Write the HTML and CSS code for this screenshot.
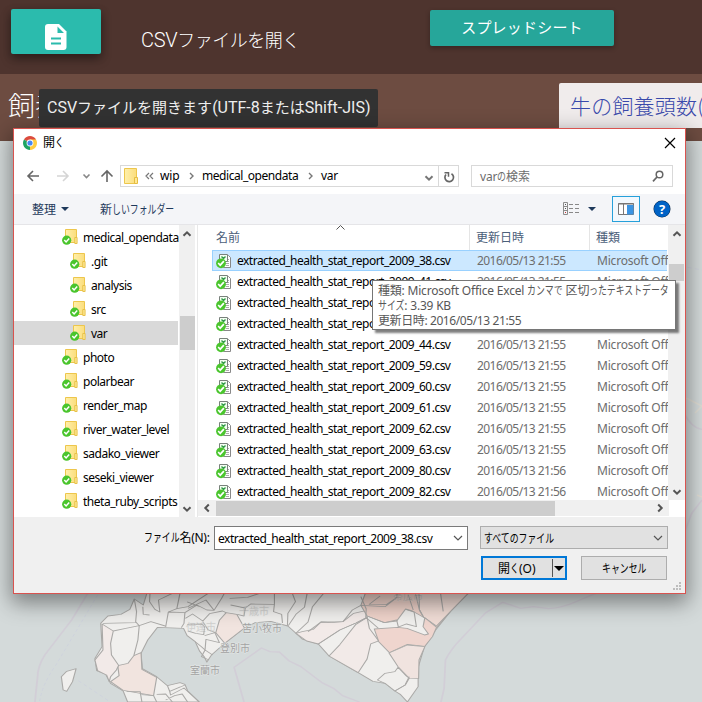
FILE: index.html
```html
<!DOCTYPE html>
<html lang="ja">
<head>
<meta charset="utf-8">
<title>CSVファイルを開く</title>
<link rel="stylesheet" href="styles.css">
</head>
<body>
<svg class="defs" aria-hidden="true">
  <linearGradient id="gold"><stop offset="0" stop-color="#fff0ab"/><stop offset="1" stop-color="#fbdd7c"/></linearGradient>
  <symbol id="folder" viewBox="0 0 16 17">
    <path d="M3.5 1.5h11v13h-11z" fill="url(#gold)" stroke="#edc64c"/>
    <path d="M12.8 9.5h2.3v6h-2.3z" fill="#ffe895" stroke="#e5bd42" stroke-width=".9"/>
    <circle cx="4.7" cy="12.2" r="4.6" fill="#4ac52d"/>
    <path d="M2.3 12.1l1.8 1.9 3.1-3.4" fill="none" stroke="#fff" stroke-width="1.5"/>
  </symbol>
  <symbol id="csv" viewBox="0 0 16 16">
    <path d="M7.500 2.500h5l2 2v10h-7z" fill="#fff" stroke="#888"/>
    <path d="M10 6.500h3M10 8.500h3M10 10.500h3M10 12.500h3" fill="none" stroke="#aaa"/>
    <path d="M3.500 1.500h8v7h-8z" fill="#f4fff2" stroke="#78817b"/>
    <path d="M5.500 3.500l2 2 2-2" stroke="#329948" fill="none" stroke-width="1.400"/>
    <circle cx="5" cy="10.300" r="4.900" fill="#4ac52d"/>
    <path d="M2.200 10l2 2.200 3.700-4" fill="none" stroke="#fff" stroke-width="1.700"/>
  </symbol>
  <symbol id="up" viewBox="0 0 10 10"><path d="M1.5 6.8L5 3.3l3.5 3.5" fill="none" stroke="#555" stroke-width="2"/></symbol>
  <symbol id="down" viewBox="0 0 10 10"><path d="M1.5 3.2L5 6.7l3.5-3.5" fill="none" stroke="#555" stroke-width="2"/></symbol>
  <symbol id="thin" viewBox="0 0 10 10"><path d="M1 3l4 4 4-4" fill="none" stroke="#555" stroke-width="1.2"/></symbol>
</svg>

<header class="bar">
  <button class="file-btn"><svg width="22" height="26" viewBox="0 0 22 26"><path fill="#fff" d="M3 0h11l7.5 7.5V23a3 3 0 0 1-3 3H3a3 3 0 0 1-3-3V3a3 3 0 0 1 3-3z"/><path fill="#2bbbad" d="M12.5 2.5v6.500h6.500zM6 13.500h10v2H6zM6 18.500h10v2H6z"/></svg></button>
  <h1 class="bar-title"><em>CSV</em>ファイルを開く</h1>
  <button class="sheet-btn"><span>スプレッドシート</span></button>
</header>
<section class="subbar">
  <h2 class="sub-title">飼養</h2>
  <div class="dataset">牛の飼養頭数(</div>
</section>
<main class="map">
  <svg width="702" height="561" viewBox="0 141 702 561">
    <g transform="translate(0 580) scale(.4477 .3333)" stroke-linejoin="round">
      <g fill="none" stroke="#d2ced7" stroke-width="4">
        <path d="M196 40L160 120 100 225Q84 260 84 290L78 366"/>
        <path d="M545 366L523 262 584 204 603 215 624 216 646 243 672 260 718 307 745 325 765 347 803 366"/>
        <path d="M985 366L992 325 995 240Q1008 205 1031 175L1085 98 1123 67 1163 85 1192 80 1225 86Q1255 84 1285 66L1325 43 1500-40 1545-200 1568-240"/>
        <path d="M1528-500Q1545-455 1568-452"/>
        <path stroke="#cdd0dd" stroke-width="2" stroke-dasharray="9 7" d="M218 45L125 255Q95 310 88 366M175 302L242 362M1490-950L1568-930"/>
      </g>
      <g stroke="#aaa9a7" stroke-width="2.500" fill="#f0efed">
        <path d="M328 40L320 75 300 57 290 88 270 103 241 108 225 130 228 200 212 235 216 272 236 283 247 310 275 333 285 366H445L419 332 413 313 402 308 374 317 350 290 318 266 315 220 330 180 352 142 410 145 418 167 436 185 446 214 457 232 462 246 473 224 502 190 546 144 570 128 605 124 643 138 661 160 675 177 711 192 735 228 800 278 833 304 860 310 882 333 895 344 910 366 934 320 934 262 948 200 973 150 1005 96 1046 40z"/>
        <path fill="#f1e4df" d="M315 218L299 227 286 250 263 257 266 287 247 305 275 331 343 347 350 292 317 268z"/>
        <path fill="#f1e4df" d="M502 190L482 158 490 121 505 98 529 103 546 144z"/>
        <path fill="#f2eae8" d="M228 132L253 153 247 190 249 225 265 256 260 270 247 290 244 305 238 285 218 272 212 240 230 210z"/>
        <path fill="#f2eae8" d="M735 228L759 194 795 133 820 112 825 145 846 183 828 192 820 237 800 278z"/>
        <path fill="#f2eae8" d="M661 160L675 155 700 148 717 126 740 128 766 125 790 100 817 92 820 112 795 129 759 150 711 192 685 183z"/>
        <path fill="#efd3ca" d="M816 40H985L990 94 1005 96 975 143 960 123 945 111 921 93 906 87 886 123 858 128 820 108 806 76z"/>
        <path fill="#f0dcd5" d="M928 40H1046L1005 96 975 138 946 111 937 90z"/>
        <path fill="#efd5ce" d="M836 147L888 142 909 145 948 165 957 162 945 140 949 113 975 142 966 170 949 199 910 193 870 218 846 185z"/>
        <path fill="#f0e3df" d="M869 219L910 195 949 200 936 240 935 296 914 295 889 260z"/>
        <path fill="#f0efed" d="M889 262L882 275 860 280 843 300 860 310 882 333 905 315 914 295 907 287z"/>
      </g>
      <g stroke="#aaa9a7" stroke-width="2.500" fill="none">
        <path d="M300 57L305 95 303 125 311 137 337 125 369 138M335 40L334 65 346 88 357 96 354 60 385 40M319 80L320 103 334 105M303 128L230 130M253 153L281 145 311 137 308 180 299 227M370 141L376 96 395 86 402 40M376 96L413 98 411 130 405 143M395 86L420 80 441 61 465 40M413 98L440 75 462 90 478 91 495 55 501 40M414 115L430 102 453 123 468 101 497 93 505 98M418 66L445 79M420 85L460 60 478 91M418 133L450 132 457 140 455 164 437 160 420 153M453 125L465 150 482 158M457 167L480 158 490 188 460 178 458 210 475 225M436 185L450 200 458 210 450 230 467 240M513 55L553 52 580 40M515 75L548 84 560 72 613 73 611 95 629 103 631 129M548 84L545 108 530 103M613 40L613 73M653 40L660 65 643 100 642 137M686 40L680 82 661 103 644 137M723 40L698 80 688 126 661 160M806 76L787 90 766 125 717 126 688 155M806 50L818 87 817 112 845 145M711 192L759 150 795 129 820 112M820 108L859 128 886 120 890 142M906 88L925 96 930 140 908 132 888 142M849 48L825 73 863 74 886 53 887 40M806 76L860 80 886 53M936 40L937 90 946 112M984 40L990 94M912 45L923 90M882 333L905 315 914 290M343 347L350 366M350 343L370 342 385 366M283 334L313 335 317 366M316 344L343 347M374 317L379 334 403 321 413 315M379 334L381 345 411 324 445 366M370 360L390 347 407 342 419 366"/>
        <path fill="#f0efed" d="M170 266L162 305 149 334 141 330 137 290 149 274z"/>
      </g>
    </g>
    <g class="places">
      <text x="242" y="632">苫小牧市</text><text x="220" y="652">登別市</text><text x="190" y="674">室蘭市</text>
      <g opacity=".4"><text x="239" y="615">千歳市</text><text x="186" y="631">伊達市</text><text x="393" y="600">帯広市</text></g>
    </g>
    <path d="M686 398l16 8-7 7M697 495l5 2" fill="none" stroke="#e0ddd4" stroke-width="1.500"/>
  </svg>
</main>

<div class="hint"><span><em>CSV</em>ファイルを開きます<em>(UTF-8</em>または<em>Shift-JIS)</em></span></div>

<div class="dialog">
  <div class="titlebar">
    <svg width="14" height="14" viewBox="0 0 14 14"><path d="M7 7L.94 3.500A7 7 0 0 1 13.060 3.500z" fill="#dc4b3e"/><path d="M7 7L.94 3.500A7 7 0 0 0 7 14z" fill="#1da462"/><path d="M7 7L7 14A7 7 0 0 0 13.060 3.500H7z" fill="#ffcd41"/><circle cx="7" cy="7" r="3.400" fill="#fff"/><circle cx="7" cy="7" r="2.600" fill="#4688f1"/></svg>
    <span class="t-title">開<span class="k n1">く</span></span>
    <svg class="close" width="12" height="12" viewBox="0 0 12 12"><path d="M1 1l10 10M11 1L1 11" stroke="#000" stroke-width="1.200"/></svg>
  </div>
  <div class="nav">
    <svg width="88" height="22" viewBox="0 0 88 22" fill="none" stroke-width="1.600"><path d="M2 11h11M7 6l-5 5 5 5" stroke="#666"/><path d="M31 11h11M37 6l5 5-5 5" stroke="#d5d5d5"/><path d="M57.500 9.500l3 3 3-3" stroke="#888"/><path d="M81 17V6M75.500 11.500L81 6l5.500 5.500" stroke="#666"/></svg>
    <div class="address">
      <svg width="14" height="17" viewBox="0 0 14 17"><path d="M.5.5h12v15H.500z" fill="url(#gold)" stroke="#edc64c"/><path d="M10.500 9.500h3v6h-3z" fill="#ffe895" stroke="#e5bd42"/></svg>
      <svg class="laquo" width="9" height="8" viewBox="0 0 9 8"><path d="M4 1L1 4l3 3M8 1L5 4l3 3" fill="none" stroke="#777" stroke-width="1.200"/></svg>
      <span class="t-wip">wip</span>
      <svg class="crumb" width="5" height="8" viewBox="0 0 5 8"><path d="M1 1l3 3-3 3" fill="none" stroke="#777" stroke-width="1.400"/></svg>
      <span class="t-med">medical_opendata</span>
      <svg class="crumb" width="5" height="8" viewBox="0 0 5 8"><path d="M1 1l3 3-3 3" fill="none" stroke="#777" stroke-width="1.400"/></svg>
      <span class="t-var">var</span>
      <svg class="drop" width="10" height="10"><use href="#down" opacity=".8"/></svg>
      <div class="reload"><svg width="12" height="12" viewBox="0 0 12 12"><path d="M8.500 2.700A4.300 4.300 0 1 1 3 3.500" fill="none" stroke="#666" stroke-width="1.700"/><path d="M1.500 1.800h4v4" fill="none" stroke="#666" stroke-width="1.500"/></svg></div>
    </div>
    <div class="search"><span>var<span class="k n1">の</span>検索</span><svg width="12" height="12" viewBox="0 0 12 12"><circle cx="7.500" cy="4.500" r="3.300" fill="none" stroke="#666" stroke-width="1.500"/><path d="M5 7L1 11.300" stroke="#666" stroke-width="1.700"/></svg></div>
  </div>
  <div class="toolbar">
    <span class="t-org">整理</span><i class="tri"></i><span class="t-new">新<span class="k n7">しいフォルダー</span></span>
    <svg class="view" width="17" height="14" viewBox="0 0 17 14"><path d="M.5.500h4v12h-4zM.5 4.500h4M.5 8.500h4" fill="none" stroke="#8c8c8c"/><path d="M6 2.500h4M12 2.500h4M6 6.500h4M12 6.500h4M6 10.500h4M12 10.500h4" stroke="#888"/><path d="M2 2.500h1M2 6.500h1" stroke="#555"/><path d="M2 10.500h1" stroke="#c33"/></svg>
    <i class="tri"></i>
    <div class="pane"><svg width="16" height="12" viewBox="0 0 16 12"><path d="M.5.500h15v11H.500z" fill="#fff" stroke="#777"/><path d="M0 1h16M5.500 1v10" stroke="#777"/><path d="M9 2h6.500v9.500H9z" fill="#3a94e3"/></svg></div>
    <span class="help">?</span>
  </div>
  <div class="content">
    <ul class="tree">
      <li><svg><use href="#folder"/></svg><span>medical_opendata</span></li>
      <li class="deep"><svg><use href="#folder"/></svg><span>.git</span></li>
      <li class="deep"><svg><use href="#folder"/></svg><span>analysis</span></li>
      <li class="deep"><svg><use href="#folder"/></svg><span>src</span></li>
      <li class="deep current"><svg><use href="#folder"/></svg><span>var</span></li>
      <li><svg><use href="#folder"/></svg><span>photo</span></li>
      <li><svg><use href="#folder"/></svg><span>polarbear</span></li>
      <li><svg><use href="#folder"/></svg><span>render_map</span></li>
      <li><svg><use href="#folder"/></svg><span>river_water_level</span></li>
      <li><svg><use href="#folder"/></svg><span>sadako_viewer</span></li>
      <li><svg><use href="#folder"/></svg><span>seseki_viewer</span></li>
      <li><svg><use href="#folder"/></svg><span>theta_ruby_scripts</span></li>
    </ul>
    <div class="vscroll tree-scroll"><svg><use href="#up"/></svg><i></i><svg><use href="#down"/></svg></div>
    <div class="list">
      <div class="list-top">
        <div class="files">
          <div class="head"><span>名前</span><span>更新日時</span><span>種類</span><svg class="sort" width="9" height="5" viewBox="0 0 9 5"><path d="M.5 4.500l4-4 4 4" fill="none" stroke="#555"/></svg></div>
          <div class="row sel"><svg><use href="#csv"/></svg><b>extracted_health_stat_report_2009_38.csv</b><span class="date">2016/05/13 21:55</span><span>Microsoft Off</span></div>
          <div class="row"><svg><use href="#csv"/></svg><b>extracted_health_stat_report_2009_41.csv</b><span class="date">2016/05/13 21:55</span><span>Microsoft Off</span></div>
          <div class="row"><svg><use href="#csv"/></svg><b>extracted_health_stat_repo</b></div>
          <div class="row"><svg><use href="#csv"/></svg><b>extracted_health_stat_repo</b></div>
          <div class="row"><svg><use href="#csv"/></svg><b>extracted_health_stat_report_2009_44.csv</b><span class="date">2016/05/13 21:55</span><span>Microsoft Off</span></div>
          <div class="row"><svg><use href="#csv"/></svg><b>extracted_health_stat_report_2009_59.csv</b><span class="date">2016/05/13 21:55</span><span>Microsoft Off</span></div>
          <div class="row"><svg><use href="#csv"/></svg><b>extracted_health_stat_report_2009_60.csv</b><span class="date">2016/05/13 21:55</span><span>Microsoft Off</span></div>
          <div class="row"><svg><use href="#csv"/></svg><b>extracted_health_stat_report_2009_61.csv</b><span class="date">2016/05/13 21:55</span><span>Microsoft Off</span></div>
          <div class="row"><svg><use href="#csv"/></svg><b>extracted_health_stat_report_2009_62.csv</b><span class="date">2016/05/13 21:55</span><span>Microsoft Off</span></div>
          <div class="row"><svg><use href="#csv"/></svg><b>extracted_health_stat_report_2009_63.csv</b><span class="date">2016/05/13 21:55</span><span>Microsoft Off</span></div>
          <div class="row"><svg><use href="#csv"/></svg><b>extracted_health_stat_report_2009_80.csv</b><span class="date">2016/05/13 21:56</span><span>Microsoft Off</span></div>
          <div class="row"><svg><use href="#csv"/></svg><b>extracted_health_stat_report_2009_82.csv</b><span class="date">2016/05/13 21:56</span><span>Microsoft Off</span></div>
        </div>
        <div class="vscroll list-scroll"><svg><use href="#up"/></svg><i></i><svg><use href="#down"/></svg></div>
      </div>
      <div class="hscroll"><svg class="left"><use href="#down"/></svg><i></i><svg class="right"><use href="#down"/></svg></div>
    </div>
  </div>
  <div class="footer">
    <div class="line">
      <label class="t-label"><span class="k n4">ファイル</span>名(N):</label>
      <div class="input"><span class="t-input">extracted_health_stat_report_2009_38.csv</span><svg><use href="#thin"/></svg></div>
      <div class="select"><span class="k n8">すべてのファイル</span><svg><use href="#thin"/></svg></div>
    </div>
    <div class="line actions">
      <button class="open"><span class="t-open">開<span class="k n1">く</span>(O)</span><i></i><b class="tri"></b></button>
      <button class="cancel"><span class="k n5">キャンセル</span></button>
    </div>
    <svg class="grip" width="9" height="9" viewBox="0 0 9 9" fill="#bdbdbd"><path d="M6 0h2v2H6zM3 3h2v2H3zM6 3h2v2H6zM0 6h2v2H0zM3 6h2v2H3zM6 6h2v2H6z"/></svg>
  </div>
</div>

<div class="info">
  <div>種類: Microsoft Office Excel <span class="k n4">カンマで</span> 区切<span class="k n9">ったテキストデータ</span></div>
  <div><span class="k n3">サイズ</span>: 3.39 KB</div>
  <div>更新日時: 2016/05/13 21:55</div>
</div>
</body>
</html>
```
FILE: styles.css
```css
* { box-sizing: border-box; }
html, body { margin: 0; width: 702px; height: 702px; overflow: hidden; }
body {
  position: relative;
  font-family: "Noto Sans", "Noto Sans CJK JP", sans-serif;
  font-size: 12px;
  color: #000;
}
button { font: inherit; border: 0; padding: 0; margin: 0; }
span, b, label, h1, h2, .info div, .dataset { white-space: nowrap; font-weight: normal; }
svg { display: block; flex: none; }
.defs { position: absolute; width: 0; height: 0; }

/* condensed kana runs; nN gives back the width that N squeezed characters free */
.k { display: inline-block; transform: scaleX(.74); transform-origin: 0 50%; letter-spacing: 0; }
.n1 { margin-right: -.26em; }
.n3 { margin-right: -.78em; }
.n4 { margin-right: -1.04em; }
.n5 { margin-right: -1.3em; }
.n7 { margin-right: -1.82em; }
.n8 { margin-right: -2.08em; }
.n9 { margin-right: -2.34em; }

/* page behind the dialog */
.bar { display: flex; height: 74px; background: #4e342e; padding: 9px 0 0 11px; }
.file-btn {
  width: 90px; height: 45px; border-radius: 2px; background: #2bbbad;
  box-shadow: 0 5px 11px rgba(0,0,0,.3), 0 3px 8px rgba(0,0,0,.2);
  padding: 11px 0 0 34px;
}
.bar-title {
  margin: 14px 0 0 40px; width: 289px; height: 32px;
  font: 300 18px/32px "Noto Sans CJK JP", sans-serif; color: #fff; letter-spacing: -.5px;
}
.bar-title em { font: 300 20px/32px Roboto, sans-serif; letter-spacing: -.3px; }
.sheet-btn {
  margin-top: 1px; width: 184px; height: 36px; border-radius: 2px; background: #26a69a; color: #fff;
  font: 300 15px/34px "Noto Sans CJK JP", sans-serif; letter-spacing: .2px;
  box-shadow: 0 2px 5px rgba(0,0,0,.3);
}
.sheet-btn span { position: relative; top: -1px; }
.subbar { display: flex; height: 67px; background: #6d4c41; padding-top: 9px; }
.sub-title { margin: 0 0 0 8px; width: 551px; font: 300 27px/44px "Noto Sans CJK JP", sans-serif; color: #fff; }
.dataset {
  flex: 1; height: 45px; overflow: hidden; background: #f0ecec; color: #3949ab; border-radius: 2px 0 0 0;
  padding-left: 11px; font: 300 21px/44px "Noto Sans CJK JP", sans-serif; letter-spacing: .2px;
}
.map { height: 561px; background: #d4dada; }
.places { font: 10px "Noto Sans CJK JP", sans-serif; fill: #a2a2a2; stroke: #e4e7e6; stroke-width: 1px; paint-order: stroke; }
.hint {
  position: absolute; left: 39px; top: 89px; width: 339px; height: 38px; border-radius: 2px;
  background: #323232; color: #eee; padding-left: 8px;
  font: 400 15px/36px "Noto Sans CJK JP", sans-serif;
}
.hint em { font: 400 16px/36px Roboto, sans-serif; }

/* dialog */
.dialog {
  position: absolute; left: 13px; top: 128px; width: 673px; height: 466px;
  border: 1px solid #d9534f; background: #fff; display: flex; flex-direction: column;
  box-shadow: 0 7px 20px 2px rgba(0,0,0,.42);
}
.titlebar { display: flex; height: 36px; padding: 7px 9px 0; }
.titlebar .t-title { margin-left: 6px; line-height: 14px; }
.close { margin: 1px 0 0 auto; }
.nav { display: flex; height: 29px; padding-left: 12px; align-items: flex-start; }
.address { display: flex; align-items: center; width: 339px; height: 22px; margin-left: 6px; border: 1px solid #d9d9d9; padding-left: 3px; }
.address span { line-height: 18px; }
.laquo { margin-left: 7px; }
.t-wip { margin-left: 6px; width: 20px; letter-spacing: -.2px; }
.address .crumb { margin-left: 9px; }
.t-med { margin-left: 8px; width: 97px; letter-spacing: -.45px; }
.address .t-var { margin-left: 8px; letter-spacing: -.3px; }
.drop { margin: 3px 4px 0 auto; }
.reload { border-left: 1px solid #d9d9d9; width: 20px; height: 20px; padding: 5px 0 0 4px; }
.search { display: flex; justify-content: space-between; align-items: center; width: 202px; height: 22px; margin-left: 12px; border: 1px solid #d9d9d9; padding: 0 8px; color: #6d6d6d; }
.search > span { letter-spacing: -.2px; }
.toolbar { display: flex; align-items: center; height: 31px; background: #f4f5f8; border-bottom: 1px solid #e5e5e8; padding-left: 18px; color: #1e395b; }
.t-org { width: 24px; }
.tri { width: 0; height: 0; border: 4px solid transparent; border-top: 4px solid #1e395b; border-bottom: 0; }
.toolbar .tri { margin-left: 5px; }
.t-new { margin-left: 31px; width: 76px; }
.view { margin-left: auto; }
.toolbar .view + .tri { margin-left: 8px; }
.pane { width: 28px; height: 26px; margin-left: 16px; border: 1px solid #26a0da; background: #f2f8fd; padding: 6px 0 0 5px; }
.help { width: 16px; height: 16px; margin: 0 15px 0 14px; border-radius: 50%; background: #0063c6; box-shadow: 0 0 0 .5px #024; color: #fff; font-weight: bold; font-size: 13px; line-height: 16px; text-align: center; }

.content { display: flex; height: 292px; overflow: hidden; }
.tree { width: 165px; margin: 0; padding: 0; list-style: none; }
.tree li { display: flex; height: 24px; padding: 3px 0 0 48px; }
.tree li.deep { padding-left: 56px; }
.tree li.current { background: #d9d9d9; width: 164px; }
.tree svg { width: 16px; height: 17px; }
.tree span { margin-left: 5px; line-height: 19px; letter-spacing: -.48px; }
.vscroll { display: flex; flex-direction: column; width: 15px; background: #f0f0f0; align-items: center; }
.vscroll svg { width: 10px; height: 10px; margin-top: 4px; }
.vscroll i { width: 15px; background: #cdcdcd; }
.vscroll svg:last-child { margin: auto 0 3px; }
.tree-scroll { width: 16px; }
.tree-scroll i { height: 34px; margin-top: 77px; }
.list { width: 488px; margin-left: 2px; border-left: 1px solid #e8e8e8; display: flex; flex-direction: column; }
.list-top { display: flex; height: 275px; }
.files { width: 470px; padding-left: 14px; overflow: hidden; }
.head { position: relative; display: flex; height: 25px; color: #4c607a; line-height: 25px; }
.head span { flex: none; width: 120px; border-right: 1px solid #e5e5e5; padding-left: 6px; }
.head span:first-child { width: 258px; padding-left: 4px; }
.head span:nth-child(3) { border: 0; width: 70px; }
.sort { position: absolute; left: 124px; top: 0; }
.row { display: flex; height: 21px; padding: 1px 0 0 3px; border: 1px solid transparent; border-right: 0; width: 455px; line-height: 17px; }
.row.sel { background: #cce8ff; border-color: #99d1ff; }
.row svg { width: 16px; height: 16px; margin-top: 1px; }
.row b { flex: none; margin-left: 5px; width: 240px; letter-spacing: -.51px; }
.row span { flex: none; color: #6d6d6d; letter-spacing: -.2px; }
.row .date { width: 120px; letter-spacing: -.57px; }
.list-scroll { width: 17px; }
.list-scroll i { height: 17px; margin-top: 25px; }
.hscroll { display: flex; align-items: center; height: 16px; width: 471px; background: #f0f0f0; }
.hscroll svg { width: 10px; height: 10px; }
.hscroll .left { transform: rotate(90deg); margin-left: 4px; }
.hscroll .right { transform: rotate(-90deg); margin: 0 4px 0 auto; }
.hscroll i { width: 339px; height: 15px; margin-left: 4px; background: #cdcdcd; }

.footer { position: relative; flex: 1; background: #f0f0f0; padding-top: 9px; }
.line { display: flex; }
.t-label { flex: none; margin-left: 130px; width: 70px; line-height: 23px; letter-spacing: -.3px; }
.input { display: flex; align-items: center; justify-content: space-between; width: 254px; height: 24px; border: 1px solid #7a7a7a; background: #fff; padding: 0 4px 0 3px; }
.t-input { letter-spacing: -.49px; }
.input svg, .select svg { width: 10px; height: 10px; }
.select { display: flex; align-items: center; justify-content: space-between; width: 188px; height: 23px; margin-left: 12px; border: 1px solid #adadad; background: #e1e1e1; padding: 0 4px 0 3px; }
.actions { margin-top: 6px; padding-left: 467px; gap: 14px; }
.open { display: flex; align-items: center; width: 86px; height: 24px; border: 2px solid #0078d7; background: #e1e1e1; color: #000; padding-left: 15px; }
.open .t-open { width: 54px; text-align: left; }
.open i { width: 1px; height: 18px; background: #555; }
.open .tri { margin-left: 1px; border-width: 5px; border-bottom-width: 0; border-top-color: #000; }
.cancel { width: 86px; height: 24px; border: 1px solid #adadad; background: #e1e1e1; color: #000; }
.grip { position: absolute; right: 3px; bottom: 2px; }

.info {
  position: absolute; left: 372px; top: 280px; width: 304px; height: 50px; padding: 2px 0 0 5px;
  border: 1px solid #767676; background: #fff; color: #575757; line-height: 15px; letter-spacing: -.2px;
  box-shadow: 3px 3px 2px rgba(0,0,0,.5);
}
.info div { height: 15px; }
.info div:last-child { letter-spacing: -.4px; }
```
